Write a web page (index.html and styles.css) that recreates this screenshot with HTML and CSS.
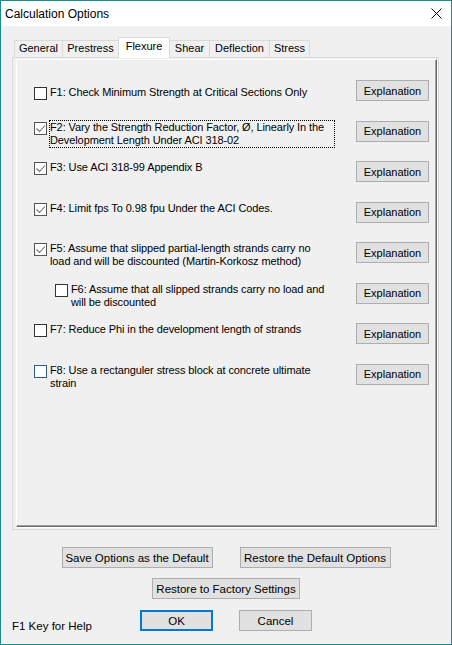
FILE: index.html
```html
<!DOCTYPE html>
<html>
<head>
<meta charset="utf-8">
<link rel="stylesheet" href="styles.css">
</head>
<body>
<div class="window">
  <div class="titlebar">
    <span class="title">Calculation Options</span>
    <svg class="close" width="11" height="11" viewBox="0 0 11 11"><path d="M0.5 0.5 L10.5 10.5 M10.5 0.5 L0.5 10.5" stroke="#000" stroke-width="1" fill="none"/></svg>
  </div>
  <div class="content">
    <div class="tabs">
      <div class="tab t-general">General</div>
      <div class="tab t-prestress">Prestress</div>
      <div class="tab t-flexure active">Flexure</div>
      <div class="tab t-shear">Shear</div>
      <div class="tab t-deflection">Deflection</div>
      <div class="tab t-stress">Stress</div>
    </div>
    <div class="panel">
      <div class="groupbox">
        <div class="row first">
          <span class="check"></span>
          <span class="label">F1: Check Minimum Strength at Critical Sections Only</span>
          <button class="btn">Explanation</button>
        </div>
        <div class="row">
          <span class="check checked"><svg viewBox="0 0 11 11" width="11" height="11"><path d="M1.5 5.5 L4.5 8.5 L10 2.5" stroke="#6f6f6f" stroke-width="1.1" fill="none"/></svg></span>
          <span class="label focus">F2: Vary the Strength Reduction Factor, Ø, Linearly In the<br>Development Length Under ACI 318-02</span>
          <button class="btn">Explanation</button>
        </div>
        <div class="row">
          <span class="check checked"><svg viewBox="0 0 11 11" width="11" height="11"><path d="M1.5 5.5 L4.5 8.5 L10 2.5" stroke="#6f6f6f" stroke-width="1.1" fill="none"/></svg></span>
          <span class="label">F3: Use ACI 318-99 Appendix B</span>
          <button class="btn">Explanation</button>
        </div>
        <div class="row">
          <span class="check checked"><svg viewBox="0 0 11 11" width="11" height="11"><path d="M1.5 5.5 L4.5 8.5 L10 2.5" stroke="#6f6f6f" stroke-width="1.1" fill="none"/></svg></span>
          <span class="label">F4: Limit fps To 0.98 fpu Under the ACI Codes.</span>
          <button class="btn">Explanation</button>
        </div>
        <div class="row">
          <span class="check checked"><svg viewBox="0 0 11 11" width="11" height="11"><path d="M1.5 5.5 L4.5 8.5 L10 2.5" stroke="#6f6f6f" stroke-width="1.1" fill="none"/></svg></span>
          <span class="label">F5: Assume that slipped partial-length strands carry no<br>load and will be discounted (Martin-Korkosz method)</span>
          <button class="btn">Explanation</button>
        </div>
        <div class="row sub">
          <span class="check"></span>
          <span class="label">F6: Assume that all slipped strands carry no load and<br>will be discounted</span>
          <button class="btn">Explanation</button>
        </div>
        <div class="row">
          <span class="check"></span>
          <span class="label">F7: Reduce Phi in the development length of strands</span>
          <button class="btn">Explanation</button>
        </div>
        <div class="row">
          <span class="check hover"></span>
          <span class="label">F8: Use a rectanguler stress block at concrete ultimate<br>strain</span>
          <button class="btn">Explanation</button>
        </div>
      </div>
    </div>
  </div>
  <div class="actions">
    <div class="arow">
      <button class="btn wide">Save Options as the Default</button>
      <button class="btn wide">Restore the Default Options</button>
    </div>
    <div class="arow r2">
      <button class="btn factory">Restore to Factory Settings</button>
    </div>
    <div class="arow3">
      <span class="help">F1 Key for Help</span>
      <div class="okcancel">
        <button class="btn ok">OK</button>
        <button class="btn">Cancel</button>
      </div>
    </div>
  </div>
</div>
</body>
</html>
```

FILE: styles.css
```css
html, body {
  margin: 0;
  padding: 0;
  background: #f0f0f0;
}
body {
  font-family: "Liberation Sans", Arial, sans-serif;
  font-size: 11px;
  color: #000;
}
.window {
  width: 452px;
  height: 645px;
  box-sizing: border-box;
  border: 1px solid #1a8c8c;
  background: #f0f0f0;
  display: flex;
  flex-direction: column;
}
.titlebar {
  height: 25px;
  background: #fff;
  display: flex;
  align-items: center;
  justify-content: space-between;
  padding-left: 4px;
  flex: none;
}
.title {
  font-size: 12px;
}
.close {
  margin-right: 9px;
  display: block;
}
.content {
  padding: 11px 0 0 11px;
}
.tabs {
  display: flex;
  align-items: flex-end;
  margin-left: 2px;
  height: 20px;
}
.tab {
  box-sizing: border-box;
  height: 17px;
  border: 1px solid #d9d9d9;
  border-bottom: none;
  text-align: center;
  line-height: 15px;
  background: #f0f0f0;
  font-size: 11px;
}
.tab + .tab { margin-left: -1px; }
.t-general { width: 49px; }
.t-prestress { width: 57px; }
.t-flexure { width: 52px; }
.t-shear { width: 41px; }
.t-deflection { width: 61px; }
.t-stress { width: 41px; }
.tab.active {
  height: 21px;
  background: #fff;
  margin-bottom: -1px;
  position: relative;
  z-index: 1;
  line-height: 17px;
  padding-bottom: 2px;
}
.panel {
  width: 427px;
  height: 473px;
  box-sizing: border-box;
  border: 1px solid #d9d9d9;
  padding: 1px 1px 2px 3px;
  display: flex;
}
.groupbox {
  flex: 1;
  box-sizing: border-box;
  border-top: 1px solid #fff;
  border-left: 1px solid #fff;
  border-right: 1px solid #696969;
  border-bottom: 1px solid #696969;
  box-shadow: inset -1px -1px 0 #a0a0a0, 1px 1px 0 #fff;
  padding: 20px 7px 0 17px;
}
.row {
  display: flex;
  align-items: flex-start;
  height: 40.57px;
}
.check {
  flex: none;
  box-sizing: border-box;
  width: 13px;
  height: 13px;
  border: 1px solid #333;
  background: #fff;
  margin-top: 1px;
  margin-right: 2px;
  display: flex;
  align-items: center;
  justify-content: center;
}
.check svg { display: block; }
.check.checked { border-color: #555; }
.check.hover { border-color: #2f5b8a; }
.label {
  flex: 1;
  border: 1px dotted transparent;
  margin-top: -1px;
  line-height: 13px;
  white-space: nowrap;
  letter-spacing: -0.1px;
}
.label.focus {
  flex: none;
  width: 286px;
  box-sizing: border-box;
  border-color: #000;
  margin-right: auto;
}
.row.first .check { margin-top: 7px; }
.row.first .label { margin-top: 5px; }
.row.sub .check { margin-left: 21px; }
.btn {
  flex: none;
  box-sizing: border-box;
  width: 73px;
  height: 21px;
  margin: 0;
  padding: 0;
  background: #e1e1e1;
  border: 1px solid #adadad;
  font-family: "Liberation Sans", Arial, sans-serif;
  font-size: 11px;
  color: #000;
  text-align: center;
}
.actions {
  margin-top: 17px;
}
.arow {
  display: flex;
  justify-content: center;
  gap: 27px;
}
.arow.r2 { margin-top: 10px; }
.btn.wide { width: 151px; font-size: 11.5px; }
.btn.factory { width: 148px; font-size: 11.5px; }
.arow3 {
  margin-top: 11px;
  display: grid;
  grid-template-columns: 1fr auto 1fr;
}
.help {
  align-self: end;
  padding-left: 11px;
  line-height: 13px;
  margin-bottom: -2px;
  font-size: 11.5px;
}
.okcancel {
  display: flex;
  gap: 26px;
}
.btn.ok {
  border: 2px solid #0078d7;
  font-size: 11.5px;
}
.okcancel .btn { font-size: 11.5px; }
```
